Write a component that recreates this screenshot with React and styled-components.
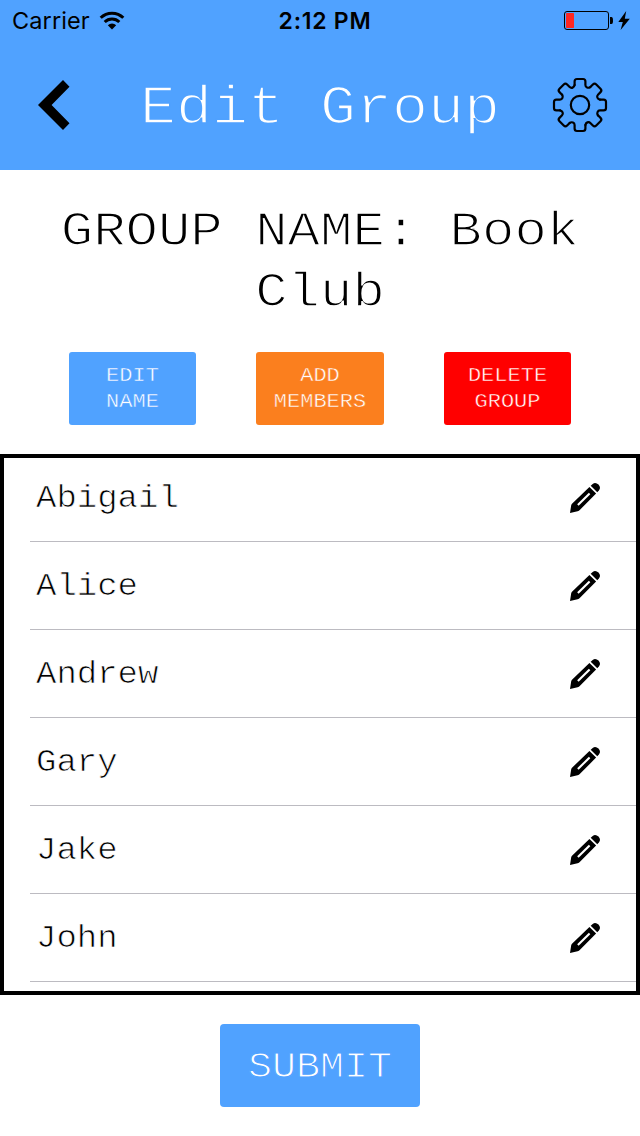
import React from "react";
import styled, { createGlobalStyle } from "styled-components";

const BLUE = "#50a2ff";
const ORANGE = "#fb7f1e";
const RED = "#ff0000";

const GlobalStyle = createGlobalStyle`
  * { box-sizing: border-box; }
  body {
    margin: 0;
    background: #fff;
    color: #000;
  }
`;

const Screen = styled.div`
  display: flex;
  flex-direction: column;
  width: 640px;
  height: 1136px;
  overflow: hidden;
  background: #fff;
  font-family: "Liberation Mono", monospace;
`;

/* A stroke in the background colour slims the letters to a light weight,
   and the vertical scale gives them a wide, low typewriter shape. */
const LightText = styled.span`
  display: inline-block;
  transform: scaleY(0.9);
  transform-origin: ${(p) => p.$origin || "50% 74%"};
  -webkit-text-stroke: ${(p) => p.$trim}px ${(p) => p.$on};
`;

const StatusBar = styled.div`
  display: grid;
  grid-template-columns: 1fr auto 1fr;
  align-items: center;
  height: 40px;
  padding: 1px 10px 0 12px;
  background: ${BLUE};
  font-family: Inter, sans-serif;
  font-size: 23.5px;
  line-height: 40px;
`;

const Carrier = styled.div`
  display: flex;
  align-items: center;
  gap: 9.5px;
  letter-spacing: 0.1px;
`;

const Time = styled.div`
  padding-left: 8px;
  font-weight: 600;
  font-size: 23px;
  letter-spacing: 0.75px;
`;

const Power = styled.div`
  display: flex;
  align-items: center;
  justify-content: flex-end;
  gap: 4px;
`;

const Header = styled.header`
  display: flex;
  align-items: center;
  justify-content: space-between;
  height: 130px;
  padding: 0 32px 0 37px;
  background: ${BLUE};
  color: #fff;
`;

const HeaderSide = styled.div`
  display: flex;
  width: 56px;
  justify-content: ${(p) => p.$align};
`;

const Title = styled.h1`
  margin: 0;
  padding: 3px 5px 0 0;
  font-size: 60px;
  font-weight: 400;
  line-height: 68px;
`;

const GroupName = styled.h2`
  height: 152px;
  margin: 0;
  padding: 32px 30px 0;
  font-size: 54px;
  font-weight: 400;
  line-height: 67.8px;
  text-align: center;
`;

const Actions = styled.div`
  display: flex;
  justify-content: center;
  gap: 60px;
  padding-top: 30px;
`;

const ActionButton = styled.button`
  width: 127.5px;
  height: 73px;
  padding: 1px 10px 0;
  border: 0;
  border-radius: 3px;
  background: ${(p) => p.$color};
  color: #fff;
  font-family: inherit;
  font-size: 22px;
  line-height: 29px;
`;

const MemberBox = styled.div`
  height: 541px;
  margin-top: 29px;
  border: 4px solid #000;
  overflow: hidden;
`;

const MemberList = styled.ul`
  margin: -4px 0 0;
  padding: 0 0 0 26px;
  list-style: none;
`;

const MemberRow = styled.li`
  display: flex;
  align-items: center;
  justify-content: space-between;
  height: 88px;
  padding: 0 36px 0 6px;
  border-bottom: 1px solid #bcbbc1;
  font-size: 34px;
  line-height: 38px;
`;

const SubmitButton = styled.button`
  align-self: center;
  width: 200px;
  height: 83px;
  margin-top: 29px;
  padding: 3px 0 0;
  border: 0;
  border-radius: 4px;
  background: ${BLUE};
  color: #fff;
  font-family: inherit;
  font-size: 40px;
  line-height: 46px;
`;

const WifiIcon = () => (
  <svg width="26" height="20" viewBox="0 0 26 20">
    <g fill="none" stroke="#000" strokeWidth="3">
      <path d="M1.7 6.8 A16 16 0 0 1 24.3 6.8" />
      <path d="M5.7 11 A10.3 10.3 0 0 1 20.3 11" />
    </g>
    <path d="M8.8 14.2 A6 6 0 0 1 17.2 14.2 L13 18.6Z" />
  </svg>
);

const BatteryIcon = () => (
  <svg width="50" height="20" viewBox="0 0 50 20">
    <rect x="0.5" y="0.5" width="44" height="18" rx="2.5" fill="none" stroke="#000" />
    <rect x="2" y="2" width="8" height="15" rx="0.7" fill="#ff2622" />
    <path d="M46 6 H47.5 Q49 6 49 9.5 Q49 13 47.5 13 H46Z" />
  </svg>
);

const BoltIcon = () => (
  <svg width="12" height="20" viewBox="0 0 12 20">
    <path d="M8.2 0 L0.3 11 H4.8 L2.6 19 L11.8 7.7 H6.8Z" />
  </svg>
);

const BackIcon = () => (
  <svg width="34" height="50" viewBox="0 0 34 50">
    <path d="M26 0 L32.5 6.7 L14.6 25 L32.5 43.2 L26 50 L1 25Z" fill="#000" />
  </svg>
);

const TEETH = [0, 45, 90, 135, 180, 225, 270, 315];

const GearIcon = () => (
  <svg width="56" height="56" viewBox="-28 -28 56 56">
    <g fill="none" stroke="#000" strokeWidth="2.2" strokeLinecap="round">
      <circle r="9.2" />
      {TEETH.map((angle) => (
        <path
          key={angle}
          transform={`rotate(${angle})`}
          d="M-5.4 -20 V-23.6 Q-5.4 -26 -3 -26 H3 Q5.4 -26 5.4 -23.6 V-20 C5.4 -17.6 8.2 -16.5 10.3 -17.9"
        />
      ))}
    </g>
  </svg>
);

const PencilIcon = () => (
  <svg width="30" height="30" viewBox="0 0 30 30">
    <path d="M19.4 3.9 L26.1 10.6 L10 26.8 Q9 27.9 7.6 28.3 L0 30 L1.2 22.2 Q1.4 21.4 2 20.8Z" />
    <path d="M20.7 2.7 L22.7 1 Q25.4 -1.2 28.5 1.6 Q31.2 4.6 29 7.3 L27.3 9.3Z" />
    <path d="M7.9 22.1 L19.6 10.4" stroke="#fff" strokeWidth="2.1" />
  </svg>
);

const ACTIONS = [
  { lines: ["EDIT", "NAME"], color: BLUE },
  { lines: ["ADD", "MEMBERS"], color: ORANGE },
  { lines: ["DELETE", "GROUP"], color: RED },
];

const MEMBERS = ["Abigail", "Alice", "Andrew", "Gary", "Jake", "John"];

export default function App() {
  return (
    <Screen>
      <GlobalStyle />
      <StatusBar>
        <Carrier>
          Carrier
          <WifiIcon />
        </Carrier>
        <Time>2:12 PM</Time>
        <Power>
          <BatteryIcon />
          <BoltIcon />
        </Power>
      </StatusBar>
      <Header>
        <HeaderSide $align="flex-start">
          <BackIcon />
        </HeaderSide>
        <Title>
          <LightText $trim={1.8} $on={BLUE}>Edit Group</LightText>
        </Title>
        <HeaderSide $align="flex-end">
          <GearIcon />
        </HeaderSide>
      </Header>
      <GroupName>
        <LightText $trim={1.6} $on="#fff" $origin="50% 0">
          GROUP NAME: Book Club
        </LightText>
      </GroupName>
      <Actions>
        {ACTIONS.map(({ lines, color }) => (
          <ActionButton key={lines[0]} $color={color}>
            <LightText $trim={0.5} $on={color} $origin="50% 50%">
              {lines[0]}
              <br />
              {lines[1]}
            </LightText>
          </ActionButton>
        ))}
      </Actions>
      <MemberBox>
        <MemberList>
          {MEMBERS.map((name) => (
            <MemberRow key={name}>
              <LightText $trim={0.8} $on="#fff">{name}</LightText>
              <PencilIcon />
            </MemberRow>
          ))}
        </MemberList>
      </MemberBox>
      <SubmitButton>
        <LightText $trim={1.2} $on={BLUE}>SUBMIT</LightText>
      </SubmitButton>
    </Screen>
  );
}
